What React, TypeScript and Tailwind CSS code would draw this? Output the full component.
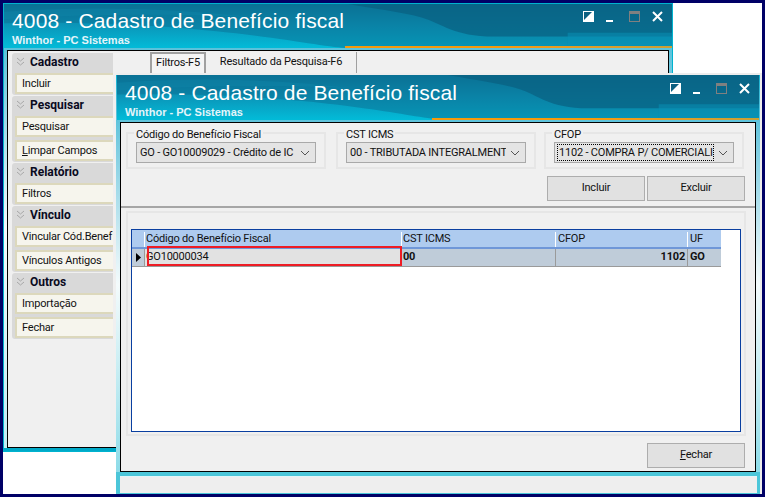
import React from 'react';

const ui = "font-['Roboto','Open_Sans',sans-serif] tracking-[-0.2px]";

const TitleBar: React.FC<{ lineClass: string }> = ({ lineClass }) => (
  <div className="relative h-full w-full overflow-hidden bg-gradient-to-b from-[#0b7396] via-[#0a97ba] to-[#02bbd8]">
    <svg className="absolute inset-0 h-full w-full" viewBox="0 0 640 46" preserveAspectRatio="none" aria-hidden="true">
      <path d="M0 0H640V46H330C300 46 200 16 0 20Z" fill="#0a6f93" opacity="0.5" />
      <path d="M330 0H640V34H470C430 34 420 20 400 14C380 8 350 4 330 0Z" fill="#095f80" opacity="0.7" />
      <path d="M0 8C80 2 160 4 240 14C180 10 80 10 0 16Z" fill="#0d84a8" opacity="0.5" />
      <path d="M540 30H640V46H540Z" fill="#0a8fb5" opacity="0.55" />
    </svg>
    <div className={`absolute bottom-0 right-0 h-[2px] bg-gradient-to-r from-[#f59a0c] via-[#f59a0c] to-[#c9a035] ${lineClass}`} />
  </div>
);

const WindowButtons: React.FC<{ topClass: string }> = ({ topClass }) => (
  <div className={`absolute right-[9px] flex items-start ${topClass}`}>
    <svg width="11" height="11" viewBox="0 0 11 11" aria-hidden="true">
      <rect width="11" height="11" fill="#fff" />
      <path d="M1 1H9L1 9Z" fill="#0b5f80" />
    </svg>
    <div className="ml-[12px] mt-[9px] h-[2px] w-[7px] bg-white" />
    <div className="ml-[16px] h-[11px] w-[11px] border border-t-[3px] border-[#808080]" />
    <svg width="11" height="11" viewBox="0 0 11 11" className="ml-[12px]" aria-hidden="true">
      <path d="M1 1L10 10M10 1L1 10" stroke="#fff" strokeWidth="2" />
    </svg>
  </div>
);

const Heading: React.FC<{ topClass: string }> = ({ topClass }) => (
  <div className={`absolute left-[8px] text-white ${topClass}`}>
    <div className="font-['Liberation_Sans',sans-serif] text-[21px] leading-[26px] tracking-[0.15px] whitespace-nowrap">
      4008 - Cadastro de Benefício fiscal
    </div>
    <div className="font-['Liberation_Sans',sans-serif] text-[11px] font-bold leading-[13px] tracking-normal text-[#e4f5fa] whitespace-nowrap">
      Winthor - PC Sistemas
    </div>
  </div>
);

const Chevrons: React.FC = () => (
  <svg width="9" height="10" viewBox="0 0 9 10" className="shrink-0" aria-hidden="true">
    <path d="M1 1L4.5 4L8 1M1 5L4.5 8L8 5" fill="none" stroke="#a8a8a8" strokeWidth="1" />
  </svg>
);

const SideItem: React.FC<{ children: React.ReactNode }> = ({ children }) => (
  <div className="flex h-[21px] items-center overflow-hidden whitespace-nowrap border-y-2 border-l-2 border-[#dcd8bc] bg-[#f6f5ed] pl-[5px] pt-[1px] text-[11px] text-[#111]">
    {children}
  </div>
);

const SideGroup: React.FC<{ title: string; items: React.ReactNode[] }> = ({ title, items }) => (
  <div className="rounded-l-[3px] bg-[#d9d9d9] pb-[1px] pl-[3px]">
    <div className="flex h-[20px] items-center gap-[5px] pb-[2px] pl-[1px] text-[12px] font-bold tracking-normal text-[#0a0a1e]">
      <Chevrons />
      {title}
    </div>
    <div className="flex flex-col gap-[3px]">
      {items.map((item, i) => (
        <SideItem key={i}>{item}</SideItem>
      ))}
    </div>
  </div>
);

const Combo: React.FC<{ value: string; focused?: boolean }> = ({ value, focused }) => (
  <div className="flex h-[21px] items-center border border-[#a9a9a9] bg-[#e4e4e4] pl-[2px] pr-[5px]">
    <div className={`flex-1 overflow-hidden whitespace-nowrap pl-[1px] text-[11px] leading-[15px] text-[#111] ${focused ? 'border border-dotted border-black' : ''}`}>
      {value}
    </div>
    <svg width="10" height="6" viewBox="0 0 10 6" className="ml-[4px] shrink-0" aria-hidden="true">
      <path d="M1 1L5 5L9 1" fill="none" stroke="#555" strokeWidth="1" />
    </svg>
  </div>
);

const FieldGroup: React.FC<{ label: string; className: string; children: React.ReactNode }> = ({ label, className, children }) => (
  <div className={`relative h-[37px] border-2 border-[#e6e6e6] px-[8px] pt-[8px] ${className}`}>
    <div className="absolute left-[6px] top-[-7px] whitespace-nowrap bg-[#f0f0f0] px-[2px] text-[11px] leading-[15px] text-[#111]">
      {label}
    </div>
    {children}
  </div>
);

const Btn: React.FC<{ children: React.ReactNode }> = ({ children }) => (
  <div className="flex h-[25px] w-[98px] items-center justify-center border border-[#adadad] bg-[#e1e1e1] text-[11px] text-[#111]">
    {children}
  </div>
);

const BackWindow: React.FC = () => (
  <div className="absolute left-[3px] top-[3px] h-[449px] w-[670px] border border-[#00b3cf] bg-gradient-to-b from-[#03b3d2] via-[#f4fbfc] to-[#bfeef5]">
    <div className="relative h-[44px]">
      <TitleBar lineClass="w-[49%]" />
      <Heading topClass="top-[4px]" />
      <WindowButtons topClass="top-[7px]" />
    </div>
    <div className="ml-[3px] mt-[2px] flex h-[398px] w-[662px] gap-[4px] border border-black bg-[#f0f0f0] py-[1px] pl-[4px]">
      <div className="flex w-[101px] shrink-0 flex-col gap-[1px] pt-[1px]">
        <SideGroup title="Cadastro" items={['Incluir']} />
        <SideGroup title="Pesquisar" items={['Pesquisar', <span key="l"><u>L</u>impar Campos</span>]} />
        <SideGroup title="Relatório" items={['Filtros']} />
        <SideGroup title="Vínculo" items={['Vincular Cód.Benef', 'Vínculos Antigos']} />
        <SideGroup title="Outros" items={['Importação', 'Fechar']} />
      </div>
      <div className="flex h-[21px] items-stretch pl-[33px] text-[11px] text-[#111]">
        <div className="flex w-[56px] items-center justify-center border-2 border-b-0 border-[#a0a0a0] bg-[#f4f4f4]">Filtros-F5</div>
        <div className="flex w-[151px] items-center justify-center border-r border-[#a0a0a0]">Resultado da Pesquisa-F6</div>
      </div>
    </div>
    <div className="h-[3px] bg-[#00a9c8]" />
  </div>
);

const GridCell: React.FC<{ className: string; children?: React.ReactNode }> = ({ className, children }) => (
  <div className={`flex shrink-0 items-center whitespace-nowrap border-r border-[#9a9a9a] ${className}`}>{children}</div>
);

const DataGrid: React.FC = () => (
  <div className="relative h-[203px] border border-[#0a3fa0] bg-white">
    <div className="flex h-[19px] w-[589px] border-b-2 border-[#6f97d8] bg-[#aecbef] pt-[2px] text-[11px] text-[#111]">
      <div className="w-[13px] shrink-0 border-r border-white" />
      <div className="flex w-[257px] shrink-0 items-center border-r border-white pl-[1px]">Código do Benefício Fiscal</div>
      <div className="flex w-[154px] shrink-0 items-center border-r border-white pl-[1px]">CST ICMS</div>
      <div className="flex w-[132px] shrink-0 items-center border-r border-white pl-[2px]">CFOP</div>
      <div className="flex flex-1 items-center pl-[2px]">UF</div>
    </div>
    <div className="flex h-[18px] w-[589px] border-b border-[#9a9a9a] text-[11px] text-[#111]">
      <GridCell className="w-[13px] justify-center bg-[#bfccd9]">
        <svg width="5" height="9" viewBox="0 0 5 9" aria-hidden="true">
          <path d="M0 0L5 4.5L0 9Z" fill="#000" />
        </svg>
      </GridCell>
      <GridCell className="w-[257px] bg-[#e2e2e2] pl-[1px]">GO10000034</GridCell>
      <GridCell className="w-[154px] bg-[#bfccd9] pl-[1px] font-bold">00</GridCell>
      <GridCell className="w-[132px] justify-end bg-[#bfccd9] pr-[2px] font-bold">1102</GridCell>
      <div className="flex flex-1 items-center bg-[#bfccd9] pl-[2px] font-bold">GO</div>
    </div>
    <div className="absolute left-[15px] top-[16px] h-[20px] w-[255px] border-2 border-[#ee1c25]" />
  </div>
);

const FrontWindow: React.FC = () => (
  <div className="absolute left-[116px] top-[73px] h-[421px] w-[646px] border-r-2 border-t-2 border-[#ededed] bg-gradient-to-b from-[#03b3d2] via-[#f4fbfc] to-[#7fd8e6]">
    <div className="relative ml-[1px] mr-[1px] h-[45px]">
      <TitleBar lineClass="w-[51%]" />
      <Heading topClass="top-[5px]" />
      <WindowButtons topClass="top-[8px]" />
    </div>
    <div className="ml-[4px] mt-[2px] h-[350px] w-[636px] border border-black bg-[#f0f0f0]">
      <div className="h-[85px] border-b-2 border-[#a6a6a6] pl-[5px] pt-[9px]">
        <div className="flex gap-[10px]">
          <FieldGroup label="Código do Benefício Fiscal" className="w-[200px]">
            <Combo value="GO - GO10009029 - Crédito de IC" />
          </FieldGroup>
          <FieldGroup label="CST ICMS" className="w-[200px]">
            <Combo value="00 - TRIBUTADA INTEGRALMENT" />
          </FieldGroup>
          <FieldGroup label="CFOP" className="-ml-[2px] w-[200px]">
            <Combo value="1102 - COMPRA P/ COMERCIALI" focused />
          </FieldGroup>
        </div>
        <div className="ml-[421px] mt-[7px] flex gap-[2px]">
          <Btn>Incluir</Btn>
          <Btn>Excluir</Btn>
        </div>
      </div>
      <div className="pl-[5px] pr-[9px] pt-[3px]">
        <div className="h-[225px] border-2 border-[#e6e6e6] px-[3px] pt-[16px]">
          <DataGrid />
        </div>
        <div className="mt-[7px] flex justify-end pr-[1px]">
          <Btn>
            <span><u>F</u>echar</span>
          </Btn>
        </div>
      </div>
    </div>
    <div className="h-[22px] bg-[#4cc6d9] pb-[1px] pl-[4px] pr-[3px] pt-[4px]">
      <div className="h-[17px] border-t border-[#e2f6f9] bg-[#eeeeee]" />
    </div>
  </div>
);

const App: React.FC = () => (
  <div className={`relative h-[497px] w-[765px] overflow-hidden bg-white ${ui}`}>
    <BackWindow />
    <FrontWindow />
    <div className="pointer-events-none absolute inset-0 border-[3px] border-[#000066]" />
  </div>
);

export default App;
